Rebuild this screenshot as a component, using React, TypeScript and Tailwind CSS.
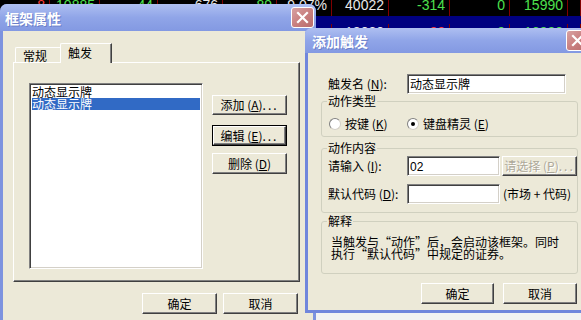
import React from 'react';

const cjk = "font-['SimSun','Noto_Sans_CJK_SC',sans-serif]";

const widths = [50, 50, 58, 65, 54, 55, 57, 61, 60, 58, 13];

const G = 'text-[#4ee04e]';
const W = 'text-[#e8e8e8]';
const R = 'text-[#ff3a3a]';

const rows: { bg: string; pad: string; cells: [string, string][] }[] = [
    {
        bg: 'bg-black',
        pad: 'h-[19px] -mt-[3px]',
        cells: [['8', R], ['10885', G], ['44', G], ['676', W], ['89', G], ['9.07%', W], ['40022', W], ['-314', G], ['0', G], ['15990', G], ['', W]]
    },
    {
        bg: 'bg-[#000080]',
        pad: 'h-[26px] pt-[8px]',
        cells: [['', W], ['', W], ['', W], ['', W], ['', W], ['', W], ['13030', W], ['-22', R], ['0', G], ['16980', G], ['', W]]
    }
];

const Dots = () => <span className="tracking-[2px]">...</span>;

function Button({ label, w, h = 'h-[21px]', focus = false, disabled = false }: { label: React.ReactNode; w: string; h?: string; focus?: boolean; disabled?: boolean }) {
    return (
        <div className={`${w} ${h} ${focus ? 'border border-black' : ''} flex shrink-0`}>
            <div className="flex-1 flex items-center justify-center bg-[#ece9d8] border-t border-l border-t-white border-l-white border-r border-b border-r-[#404040] border-b-[#404040] shadow-[inset_-1px_-1px_0_#808080]">
                <span className={`text-[12px] leading-[12px] whitespace-pre ${disabled ? 'text-[#aca899] [text-shadow:1px_1px_0_#fff]' : 'text-black'}`}>{label}</span>
            </div>
        </div>
    );
}

function Sunken({ className, children }: { className: string; children?: React.ReactNode }) {
    return (
        <div className={`${className} bg-white border border-t-[#808080] border-l-[#808080] border-b-white border-r-white shadow-[inset_1px_1px_0_#404040,inset_-1px_-1px_0_#d4d0c8] shrink-0`}>
            {children}
        </div>
    );
}

function CloseBtn() {
    return (
        <div className="w-[23px] h-[21px] rounded-[3px] border border-white bg-gradient-to-br from-[#d8a2a2] via-[#c98080] to-[#b86c6c] flex items-center justify-center shrink-0">
            <svg width="13" height="13" viewBox="0 0 13 13">
                <path d="M2 2 L11 11 M11 2 L2 11" stroke="white" strokeWidth="2.2" strokeLinecap="square" />
            </svg>
        </div>
    );
}

function Radio({ checked }: { checked?: boolean }) {
    return (
        <div className="w-[12px] h-[12px] rounded-full bg-white border border-t-[#808080] border-l-[#808080] border-b-[#d4d0c8] border-r-[#d4d0c8] flex items-center justify-center shrink-0">
            {checked && <div className="w-[4px] h-[4px] rounded-full bg-black" />}
        </div>
    );
}

function Group({ title, className, children }: { title: string; className: string; children: React.ReactNode }) {
    return (
        <fieldset className={`w-[257px] border border-[#d0d0bf] rounded-[3px] pl-[6px] ${className}`}>
            <legend className="px-[1px] -ml-[1px] text-[12px] leading-[14px]">{title}</legend>
            {children}
        </fieldset>
    );
}

export default function App() {
    return (
        <div className={`relative w-[581px] h-[320px] overflow-hidden bg-black flex flex-col ${cjk} text-black`}>
            {/* stock table behind */}
            {rows.map((row, i) => (
                <div key={i} className={`flex ${row.bg} ${row.pad} shrink-0`}>
                    {row.cells.map(([t, c], j) => (
                        <div
                            key={j}
                            style={{ width: widths[j] }}
                            className={`shrink-0 border-r border-[#800000] pr-[4px] text-right font-['Liberation_Sans',Arial,sans-serif] text-[14px] leading-[16px] ${c}`}
                        >
                            {t}
                        </div>
                    ))}
                </div>
            ))}
            <div className="flex-1" />
            <div className="h-[7px] bg-[#f2f2f2] border-l-[3px] border-[#5a6fd6] ml-[313px]" />

            {/* 框架属性 window */}
            <div className="absolute left-0 top-[4px] w-[316px] h-[330px] rounded-t-[7px] bg-[#7d93df] flex flex-col overflow-hidden">
                <div className="h-[27px] flex items-center justify-between pl-[5px] pr-[2px] bg-gradient-to-b from-[#aebff1] via-[#90a5e8] to-[#8399e2]">
                    <span className="text-white text-[14px] font-bold leading-[14px] [text-shadow:1px_1px_0_#6b7fc9]">框架属性</span>
                    <CloseBtn />
                </div>
                <div className="mx-[3px] flex-1 bg-[#ece9d8] pl-[10px] pt-[12px]">
                    <div className="flex items-end h-[19px] pl-[2px]">
                        <div className="w-[47px] h-[15px] border-t border-l border-t-white border-l-white border-r border-r-[#808080] rounded-tl-[2px] text-[12px] leading-[12px] flex items-center pl-[7px] pt-[1px]">
                            常规
                        </div>
                        <div className="relative z-10 -ml-[2px] -mb-[1px] w-[52px] h-[20px] bg-[#ece9d8] border-t border-l border-t-white border-l-white border-r border-r-[#404040] shadow-[inset_-1px_0_0_#808080] rounded-tl-[2px] text-[12px] leading-[12px] flex items-start pl-[7px] pt-[3px]">
                            触发
                        </div>
                    </div>
                    <div className="w-[287px] h-[220px] border-t border-l border-t-white border-l-white border-r border-b border-r-[#404040] border-b-[#404040] shadow-[inset_-1px_-1px_0_#808080] flex pl-[15px] pt-[20px]">
                        <Sunken className="w-[174px] h-[186px] p-[2px]">
                            <div className="h-[12px] text-[12px] leading-[12px] whitespace-nowrap">动态显示牌</div>
                            <div className="h-[12px] text-[12px] leading-[12px] whitespace-nowrap bg-[#316ac5] text-white">动态显示牌</div>
                        </Sunken>
                        <div className="ml-[9px] mt-[12px] flex flex-col">
                            <Button w="w-[75px]" h="h-[20px]" label={<>添加 (<u>A</u>)<Dots /></>} />
                            <div className="mt-[10px]">
                                <Button w="w-[75px]" focus label={<>编辑 (<u>E</u>)<Dots /></>} />
                            </div>
                            <div className="mt-[7px]">
                                <Button w="w-[75px]" label={<>删除 (<u>D</u>)</>} />
                            </div>
                        </div>
                    </div>
                    <div className="flex justify-end gap-[6px] pr-[15px] mt-[11px]">
                        <Button w="w-[75px]" label="确定" />
                        <Button w="w-[75px]" label="取消" />
                    </div>
                </div>
            </div>

            {/* 添加触发 dialog */}
            <div className="absolute left-[305px] top-[28px] w-[290px] h-[285px] rounded-t-[6px] bg-[#7086dc] flex flex-col overflow-hidden">
                <div className="h-[25px] flex items-center justify-between pl-[7px] pr-[6px] bg-gradient-to-b from-[#aebff1] via-[#90a5e8] to-[#8399e2]">
                    <span className="text-white text-[14px] font-bold leading-[14px] [text-shadow:1px_1px_0_#6b7fc9]">添加触发</span>
                    <CloseBtn />
                </div>
                <div className="mx-[3px] mb-[3px] flex-1 bg-[#ece9d8] pl-[13px] pt-[21px] text-[12px] leading-[12px]">
                    <div className="flex items-center pl-[7px]">
                        <span className="w-[79px] shrink-0 whitespace-pre">触发名 (<u>N</u>):</span>
                        <Sunken className="w-[159px] h-[20px] pl-[2px] pt-[3px]">动态显示牌</Sunken>
                    </div>
                    <Group title="动作类型" className="pt-[9px] pb-[5px]">
                        <div className="flex items-center h-[14px] pl-[1px]">
                            <div className="w-[78px] flex items-center gap-[4px]">
                                <Radio />
                                <span className="whitespace-pre">按键 (<u>K</u>)</span>
                            </div>
                            <div className="flex items-center gap-[4px]">
                                <Radio checked />
                                <span className="whitespace-pre">键盘精灵 (<u>E</u>)</span>
                            </div>
                        </div>
                    </Group>
                    <Group title="动作内容" className="mt-[4px] pt-[1px] pb-[8px]">
                        <div className="flex items-center">
                            <span className="w-[79px] shrink-0 whitespace-pre">请输入 (<u>I</u>):</span>
                            <Sunken className="w-[93px] h-[20px] pl-[2px] pt-[4px] font-['Liberation_Sans',Arial,sans-serif]">02</Sunken>
                            <div className="ml-[2px]">
                                <Button w="w-[75px]" h="h-[20px]" disabled label={<>请选择 (<u>P</u>)<Dots /></>} />
                            </div>
                        </div>
                        <div className="flex items-center mt-[8px]">
                            <span className="w-[79px] shrink-0 whitespace-pre">默认代码 (<u>D</u>):</span>
                            <Sunken className="w-[93px] h-[20px]" />
                            <span className="ml-[3px] whitespace-pre">(市场 + 代码)</span>
                        </div>
                    </Group>
                    <Group title="解释" className="mt-[1px] pt-[8px] pb-[13px]">
                        <div className="pl-[3px] leading-[12px]">
                            当触发与“动作”后，会启动该框架。同时
                            <br />
                            执行“默认代码”中规定的证券。
                        </div>
                    </Group>
                    <div className="flex mt-[9px] pl-[100px] gap-[9px]">
                        <Button w="w-[73px]" label="确定" />
                        <Button w="w-[74px]" label="取消" />
                    </div>
                </div>
            </div>
        </div>
    );
}
